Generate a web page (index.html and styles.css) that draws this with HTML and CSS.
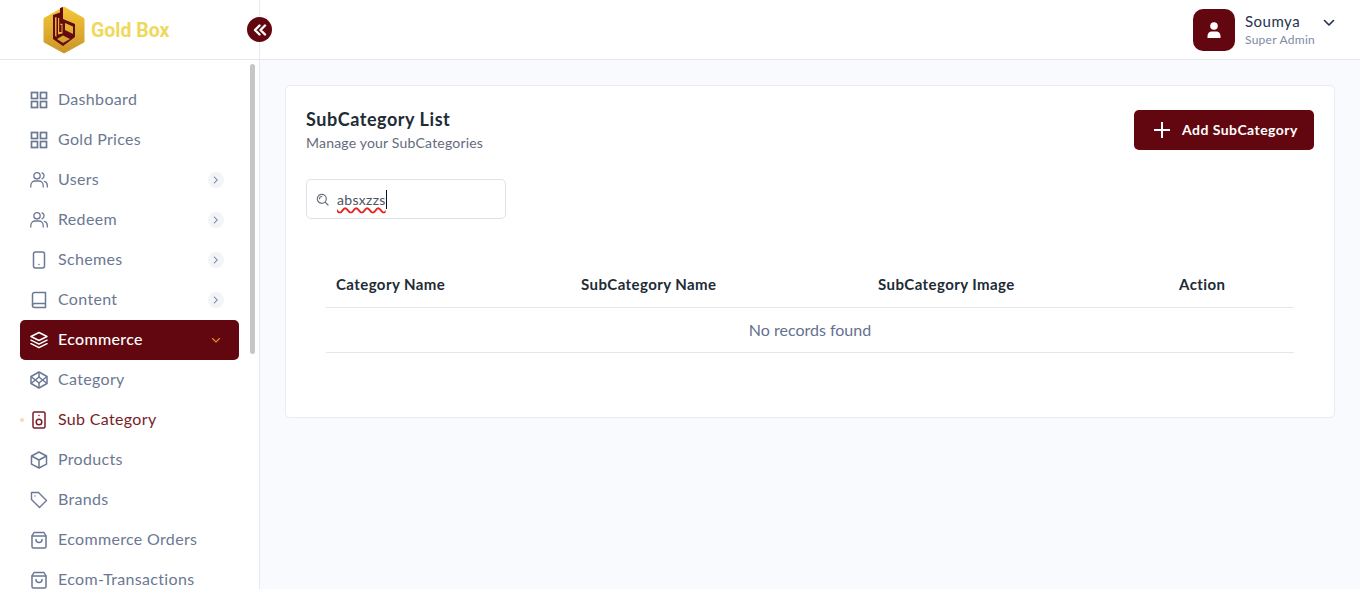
FILE: index.html
```html
<!DOCTYPE html>
<html>
    <head>
        <title>SubCategory List</title>
        <link rel="stylesheet" href="styles.css">
    </head>
    <body>
        <svg class="icon-defs" width="0" height="0">
            <defs>
                <linearGradient id="hex-gold" x1="0" y1="0" x2="0" y2="1">
                    <stop offset="0" stop-color="#f5c736"/>
                    <stop offset="1" stop-color="#c9952a"/>
                </linearGradient>
                <symbol id="i-grid" viewBox="0 0 18 18"><g fill="none" stroke="currentColor" stroke-width="1.7"><rect x="1.5" y="1.5" width="6" height="6"/><rect x="10.5" y="1.5" width="6" height="6"/><rect x="1.5" y="10.5" width="6" height="6"/><rect x="10.5" y="10.5" width="6" height="6"/></g></symbol>
                <symbol id="i-users" viewBox="0 0 18 18"><g fill="none" stroke="currentColor" stroke-width="1.3" stroke-linecap="round"><circle cx="7" cy="4.8" r="3.2"/><path d="M.8 16v-1.6c0-2.6 2-4.4 4.4-4.4h3.600c2.400 0 4.400 1.800 4.400 4.400V16"/><path d="M12 1.800a3.200 3.200 0 0 1 0 6"/><path d="M14.500 10.400c1.700.6 2.800 2.100 2.800 4V16"/></g></symbol>
                <symbol id="i-tablet" viewBox="0 0 18 18"><g fill="none" stroke="currentColor" stroke-width="1.5"><rect x="3.500" y="1" width="11" height="16" rx="2"/><path d="M9 13.500h.01" stroke-linecap="round"/></g></symbol>
                <symbol id="i-book" viewBox="0 0 18 18"><g fill="none" stroke="currentColor" stroke-width="1.5" stroke-linejoin="round"><path d="M2.500 14.500v-11A2 2 0 0 1 4.500 1.500h11v15h-11a2 2 0 0 1-2-2z"/><path d="M2.500 14.500a2 2 0 0 1 2-2h11"/></g></symbol>
                <symbol id="i-layers" viewBox="0 0 18 18"><g fill="none" stroke="currentColor" stroke-width="1.500" stroke-linejoin="round" stroke-linecap="round"><path d="M9 1.500 1 5.500l8 4 8-4z"/><path d="M1 9.200l8 4 8-4"/><path d="M1 12.700l8 4 8-4"/></g></symbol>
                <symbol id="i-codepen" viewBox="0 0 18 18"><g fill="none" stroke="currentColor" stroke-width="1.500" stroke-linejoin="round"><path d="M9 1 17 5.500v7L9 17l-8-4.500v-7z"/><path d="M9 6 12.600 9 9 12 5.400 9z"/><path d="M9 1v5M9 12v5M1 5.500 5.400 9 1 12.500M17 5.500 12.600 9l4.400 3.500"/></g></symbol>
                <symbol id="i-speaker" viewBox="0 0 18 18"><g fill="none" stroke="currentColor" stroke-width="1.500"><rect x="3" y="1" width="12" height="16" rx="1.500"/><circle cx="9" cy="11" r="2.800"/><path d="M9 4.500h.01" stroke-linecap="round"/></g></symbol>
                <symbol id="i-box" viewBox="0 0 18 18"><g fill="none" stroke="currentColor" stroke-width="1.500" stroke-linejoin="round"><path d="M9 1 16.500 5v8.200L9 17l-7.500-3.800V5z"/><path d="M1.500 5 9 9l7.500-4M9 9v8"/></g></symbol>
                <symbol id="i-tag" viewBox="0 0 18 18"><g fill="none" stroke="currentColor" stroke-width="1.400" stroke-linejoin="round"><path d="M1.500 1.500h7l8 8-7 7-8-8z"/><path d="M5 5h.01" stroke-linecap="round"/></g></symbol>
                <symbol id="i-bag" viewBox="0 0 18 18"><g fill="none" stroke="currentColor" stroke-width="1.500" stroke-linejoin="round" stroke-linecap="round"><path d="M2 5 4 1.500h10L16 5v10.500a1.500 1.500 0 0 1-1.500 1.500h-11A1.500 1.500 0 0 1 2 15.500z"/><path d="M2 5h14"/><path d="M6 8.500c0 4 6 4 6 0"/></g></symbol>
                <symbol id="i-right" viewBox="0 0 14 14"><path d="M5 3.500 8.500 7 5 10.500" fill="none" stroke="currentColor" stroke-width="1.200" stroke-linecap="round" stroke-linejoin="round"/></symbol>
            </defs>
        </svg>

        <aside class="sidebar">
            <div class="logo-bar">
                <svg class="logo-mark" width="42" height="48" viewBox="0 0 42 48">
                    <path d="M21 1 41 12.500V36L21 47 1 36V12.500z" fill="url(#hex-gold)" stroke="url(#hex-gold)" stroke-linejoin="round"/>
                    <path d="M10 9 17 6.500V2l3-1v12l12 5v13l-12 9-10-7zM12 11.500V30l1.500 1V11zM22 17v7l8 4V20.500zM14 33l6-3.500 7 3.500-7 4z" fill="#650913" fill-rule="evenodd"/>
                    <path d="M15 12h1.200v14h2.300v-7h-1.200v-1.200h2.200V27.500l-4.500 1z" fill="#e5b431"/>
                </svg>
                <span class="logo-text">Gold Box</span>
            </div>
            <button class="collapse-btn">
                <svg width="14" height="12" viewBox="0 0 14 12"><path d="M6.500 1.500 2 6l4.500 4.500M12 1.500 7.500 6l4.500 4.500" fill="none" stroke="#fff" stroke-width="2.400" stroke-linecap="round" stroke-linejoin="round"/></svg>
            </button>
            <div class="scroll-thumb"></div>
            <nav class="nav">
                <a class="nav-item"><svg class="nav-icon"><use href="#i-grid"/></svg>Dashboard</a>
                <a class="nav-item"><svg class="nav-icon"><use href="#i-grid"/></svg>Gold Prices</a>
                <a class="nav-item"><svg class="nav-icon"><use href="#i-users"/></svg>Users<span class="nav-more"><svg width="14" height="14"><use href="#i-right"/></svg></span></a>
                <a class="nav-item"><svg class="nav-icon"><use href="#i-users"/></svg>Redeem<span class="nav-more"><svg width="14" height="14"><use href="#i-right"/></svg></span></a>
                <a class="nav-item"><svg class="nav-icon"><use href="#i-tablet"/></svg>Schemes<span class="nav-more"><svg width="14" height="14"><use href="#i-right"/></svg></span></a>
                <a class="nav-item"><svg class="nav-icon"><use href="#i-book"/></svg>Content<span class="nav-more"><svg width="14" height="14"><use href="#i-right"/></svg></span></a>
                <a class="nav-item active"><svg class="nav-icon"><use href="#i-layers"/></svg>Ecommerce<svg class="nav-down" width="10" height="10" viewBox="0 0 10 10"><path d="M1.500 3.500 5 7l3.500-3.500" fill="none" stroke="currentColor" stroke-width="1.100" stroke-linecap="round" stroke-linejoin="round"/></svg></a>
                <a class="nav-item"><svg class="nav-icon"><use href="#i-codepen"/></svg>Category</a>
                <a class="nav-item current"><svg class="nav-icon"><use href="#i-speaker"/></svg>Sub Category</a>
                <a class="nav-item"><svg class="nav-icon"><use href="#i-box"/></svg>Products</a>
                <a class="nav-item"><svg class="nav-icon"><use href="#i-tag"/></svg>Brands</a>
                <a class="nav-item"><svg class="nav-icon"><use href="#i-bag"/></svg>Ecommerce Orders</a>
                <a class="nav-item"><svg class="nav-icon"><use href="#i-bag"/></svg>Ecom-Transactions</a>
            </nav>
        </aside>

        <div class="main">
            <header class="topbar">
                <div class="avatar">
                    <svg width="16" height="16" viewBox="0 0 16 16"><circle cx="8" cy="4" r="3.800" fill="#fff"/><path d="M1.500 16v-2c0-3 2-4.500 4-4.500h5c2 0 4 1.500 4 4.500v2z" fill="#fff"/></svg>
                </div>
                <div class="user-info">
                    <div class="user-name">Soumya</div>
                    <div class="user-role">Super Admin</div>
                </div>
                <svg class="user-caret" width="12" height="8" viewBox="0 0 12 8"><path d="M1.500 1.500 6 6l4.500-4.500" fill="none" stroke="#1f2f4d" stroke-width="1.600" stroke-linecap="round" stroke-linejoin="round"/></svg>
            </header>

            <main class="content">
                <section class="card">
                    <div class="card-head">
                        <div>
                            <h1 class="card-title">SubCategory List</h1>
                            <p class="card-sub">Manage your SubCategories</p>
                        </div>
                        <button class="add-btn">
                            <svg width="16" height="16" viewBox="0 0 16 16"><path d="M8 0v16M0 8h16" stroke="#fff" stroke-width="2"/></svg>
                            <span class="add-label">Add SubCategory</span>
                        </button>
                    </div>

                    <div class="search">
                        <svg width="13" height="13" viewBox="0 0 13 13"><g fill="none" stroke="#6b7280" stroke-width="1.200" stroke-linecap="round"><circle cx="5.800" cy="5.800" r="4.500"/><path d="M9.200 9.200 12 12"/><path d="M3.500 5.800a2.300 2.300 0 0 1 2.300-2.300"/></g></svg>
                        <span class="search-text">absxzzs</span>
                    </div>

                    <table class="list-table">
                        <colgroup>
                            <col class="col-cat"><col class="col-sub"><col class="col-img"><col class="col-act">
                        </colgroup>
                        <thead>
                            <tr>
                                <th>Category Name</th>
                                <th>SubCategory Name</th>
                                <th>SubCategory Image</th>
                                <th>Action</th>
                            </tr>
                        </thead>
                        <tbody>
                            <tr><td colspan="4" class="empty">No records found</td></tr>
                        </tbody>
                    </table>
                </section>
            </main>
        </div>
    </body>
</html>
```

FILE: styles.css
```css
:root {
    --maroon: #62070f;
    --nav-clr: #6b7893;
    --line-clr: #e3e6ea;
    --ink-clr: #212b36;
}

* {
    box-sizing: border-box;
}

html, body {
    height: 100%;
}

body {
    margin: 0;
    display: flex;
    height: 589px;
    overflow: hidden;
    background-color: #f9fafe;
    font-family: Lato, 'Noto Sans', sans-serif;
    color: var(--ink-clr);
}

.icon-defs {
    position: absolute;
}

/* sidebar */
.sidebar {
    position: relative;
    flex: 0 0 260px;
    background-color: #fff;
    border-right: 1px solid #e8eaf0;
    overflow: visible;
}

.logo-bar {
    height: 60px;
    display: flex;
    align-items: center;
    gap: 6px;
    padding-left: 43px;
    border-bottom: 1px solid var(--line-clr);
}

.logo-text {
    padding-top: 2px;
    font-family: Roboto, sans-serif;
    font-weight: 700;
    font-size: 19.500px;
    color: #eed95c;
}

.collapse-btn {
    position: absolute;
    top: 17px;
    left: 247px;
    z-index: 2;
    width: 25px;
    height: 25px;
    padding: 0;
    border: 0;
    border-radius: 50%;
    background-color: var(--maroon);
    display: flex;
    align-items: center;
    justify-content: center;
}

.scroll-thumb {
    position: absolute;
    top: 64px;
    left: 250px;
    width: 5px;
    height: 290px;
    border-radius: 3px;
    background-color: #c6c6c6;
}

.nav {
    padding: 20px 20px 0;
    width: 259px;
    height: 529px;
    overflow: hidden;
}

.nav-item {
    height: 40px;
    display: flex;
    align-items: center;
    padding: 0 15px 3px 10px;
    border-radius: 5px;
    color: var(--nav-clr);
    font-size: 16px;
    letter-spacing: .33px;
    white-space: nowrap;
}

.nav-icon {
    width: 18px;
    height: 18px;
    margin: 3px 10px 0 0;
    flex: none;
}

.nav-more {
    margin: 3px 0 0 auto;
    width: 16px;
    height: 16px;
    border-radius: 50%;
    background-color: #f3f4f8;
    display: flex;
    align-items: center;
    justify-content: center;
}

.nav-more svg {
    width: 12px;
    height: 12px;
}

.nav-item.active {
    background-color: var(--maroon);
    color: #fff;
    font-weight: 500;
}

.nav-down {
    margin: 3px 3px 0 auto;
    color: #e98a2c;
}

.nav-item.current {
    position: relative;
    color: #7a1c28;
}

.nav-item.current::before {
    content: '';
    position: absolute;
    left: 0;
    top: 18px;
    width: 4px;
    height: 4px;
    border-radius: 50%;
    background-color: #fbd9b5;
}

/* top bar */
.main {
    flex: 1;
    min-width: 0;
}

.topbar {
    height: 60px;
    background-color: #fff;
    border-bottom: 1px solid var(--line-clr);
    display: flex;
    align-items: center;
    justify-content: flex-end;
    padding-right: 25px;
}

.avatar {
    width: 42px;
    height: 42px;
    border-radius: 10px;
    background-color: var(--maroon);
    display: flex;
    align-items: center;
    justify-content: center;
}

.user-info {
    margin-left: 10px;
    width: 78px;
}

.user-name {
    font-size: 15px;
    line-height: 18px;
    letter-spacing: .5px;
    color: #26324f;
}

.user-role {
    margin-top: 2px;
    font-size: 12px;
    line-height: 16px;
    letter-spacing: .27px;
    color: #7d8aa3;
}

.user-caret {
    margin-bottom: 14px;
}

/* content */
.content {
    padding: 25px;
}

.card {
    height: 333px;
    background-color: #fff;
    border: 1px solid #e9ebf0;
    border-radius: 5px;
    padding: 24px 20px 0;
}

.card-head {
    display: flex;
    justify-content: space-between;
    align-items: flex-start;
}

.card-title {
    margin: -1px 0 0;
    font-size: 18px;
    line-height: 20px;
    font-weight: 700;
    letter-spacing: .55px;
    color: var(--ink-clr);
}

.card-sub {
    margin: 5px 0 0;
    font-size: 14px;
    line-height: 18px;
    letter-spacing: .2px;
    color: #646b7b;
}

.add-btn {
    width: 180px;
    height: 40px;
    border: 0;
    border-radius: 5px;
    background-color: var(--maroon);
    color: #fff;
    font-family: inherit;
    font-size: 14px;
    font-weight: 700;
    letter-spacing: .45px;
    display: flex;
    align-items: center;
    gap: 12px;
    padding: 0 0 0 20px;
}

.add-label {
    margin-top: -2px;
}

.search {
    margin-top: 27px;
    width: 200px;
    height: 40px;
    border: 1px solid #dfe2e8;
    border-radius: 5px;
    display: flex;
    align-items: center;
    gap: 8px;
    padding-left: 9px;
    font-size: 14px;
    letter-spacing: .3px;
    color: #4b5563;
}

.search-text {
    border-right: 1px solid #111;
    line-height: 19px;
    text-decoration: underline wavy #e8231f;
    text-decoration-thickness: 1.500px;
    text-underline-offset: 2px;
}

.list-table {
    margin: 44px 0 0 20px;
    width: 968px;
    table-layout: fixed;
    border-collapse: collapse;
}

.col-cat { width: 245px; }
.col-sub { width: 297px; }
.col-img { width: 301px; }
.col-act { width: 125px; }

.list-table th {
    height: 44px;
    padding: 0 10px 1px;
    text-align: left;
    font-size: 15px;
    font-weight: 700;
    letter-spacing: .42px;
    color: var(--ink-clr);
    border-bottom: 1px solid var(--line-clr);
}

.empty {
    height: 45px;
    padding-bottom: 2px;
    text-align: center;
    font-size: 16px;
    color: #64718f;
    border-bottom: 1px solid var(--line-clr);
}
```
